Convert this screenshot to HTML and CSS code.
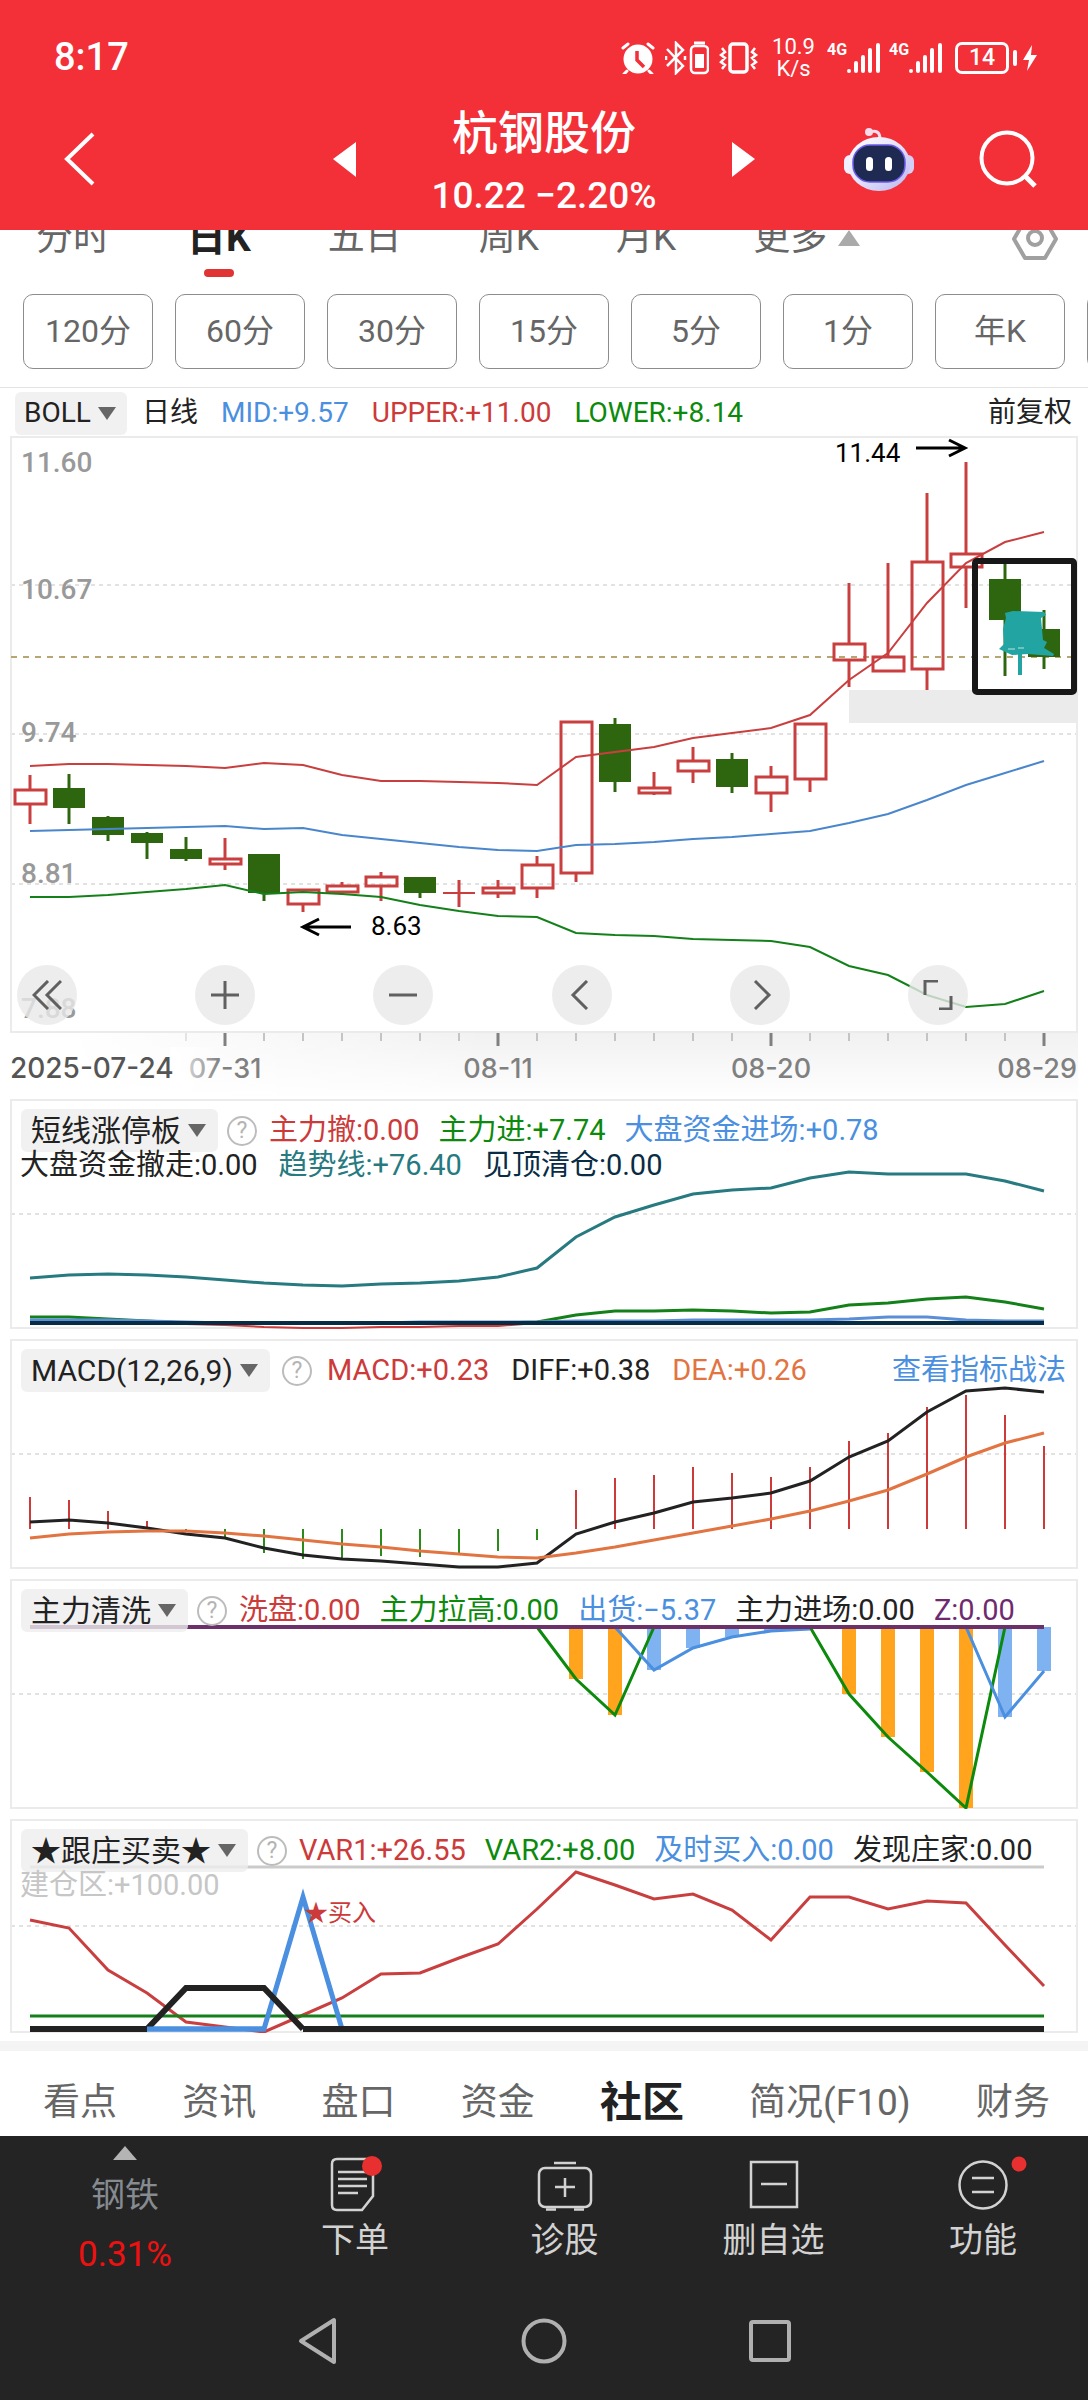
FILE: index.html
```html
<!DOCTYPE html>
<html lang="zh-CN">
<head>
<meta charset="utf-8">
<meta name="viewport" content="width=device-width, initial-scale=1">
<title>杭钢股份</title>
<link rel="stylesheet" href="styles.css">
</head>
<body>
<header class="top">
  <div class="status">
    <span class="clock">8:17</span>
    <svg width="34" height="32" viewBox="0 0 34 32"><circle cx="17" cy="17" r="14.500" fill="#fff"/><path d="M2 6 7 2M32 6 27 2M6 29l-3 3M28 29l3 3" stroke="#fff" stroke-width="3" stroke-linecap="round"/><path d="M16 9v9l7 7" fill="none" stroke="#f32f38" stroke-width="3.500"/></svg>
    <svg class="gap-m" width="44" height="34" viewBox="0 0 44 34" fill="none" stroke="#fff" stroke-width="2.500"><path d="M2 8l16 17-7 7V2l7 7L2 25M1 15v4M20 15v4"/><rect x="26" y="5" width="17" height="27" rx="4"/><path d="M29 2h11" stroke-width="3"/><path d="M30 13h9v14h-9z" fill="#fff" stroke="none"/></svg>
    <svg class="gap-m" width="40" height="34" viewBox="0 0 40 34" fill="none" stroke="#fff"><rect x="11" y="3" width="17" height="28" rx="3" stroke-width="3.500"/><path d="M3 7l3 4-4 3 4 3-4 4 4 3-3 4M36 7l-3 4 4 3-4 3 4 4-4 3 3 4" stroke-width="2.500"/></svg>
    <span class="rate"><span>10.9</span><span>K/s</span></span>
    <span class="cell"><span class="gen">4G</span><svg width="34" height="32" viewBox="0 0 34 32" stroke="#fff" stroke-width="4" stroke-linecap="round"><path d="M2 29v0M9 21v8M16 15v14M23 8v21M31 3v26"/></svg></span>
    <span class="cell"><span class="gen">4G</span><svg width="34" height="32" viewBox="0 0 34 32" stroke="#fff" stroke-width="4" stroke-linecap="round"><path d="M2 29v0M9 21v8M16 15v14M23 8v21M31 3v26"/></svg></span>
    <span class="battery">14</span>
    <svg class="bolt" width="14" height="28" viewBox="0 0 14 28"><path d="M9 1 0 16h6l-2 11L14 11H8z" fill="#fff"/></svg>
  </div>
  <div class="titlebar">
    <button class="icon-btn" aria-label="返回"><svg width="32" height="54" viewBox="0 0 32 54"><path d="M29 2 3 27l26 25" fill="none" stroke="#fff" stroke-width="4"/></svg></button>
    <div class="stock">
      <button class="icon-btn" aria-label="上一只"><svg width="23" height="35" viewBox="0 0 23 35"><path d="M23 0v35L0 17z" fill="#fff"/></svg></button>
      <div class="quote"><h1>杭钢股份</h1><p>10.22 −2.20%</p></div>
      <button class="icon-btn" aria-label="下一只"><svg width="23" height="35" viewBox="0 0 23 35"><path d="M0 0v35l23-18z" fill="#fff"/></svg></button>
    </div>
    <div class="tools">
      <button class="icon-btn" aria-label="智能助手"><svg width="70" height="64" viewBox="0 0 70 64">
        <defs><linearGradient id="shell" x1="0" y1="0" x2="1" y2="1"><stop offset="0" stop-color="#ffffff"/><stop offset=".5" stop-color="#e4e2fb"/><stop offset="1" stop-color="#b9b4ee"/></linearGradient></defs>
        <path d="M26 5c6-2 10 0 10 7" fill="none" stroke="#f6dcec" stroke-width="3"/><circle cx="25" cy="5" r="4" fill="#f8dcec"/>
        <rect x="0" y="28" width="12" height="19" rx="6" fill="#f2f0ff"/><rect x="58" y="28" width="12" height="19" rx="6" fill="#d5cff5"/>
        <ellipse cx="35" cy="37" rx="31" ry="27" fill="url(#shell)"/>
        <rect x="9" y="18" width="52" height="37" rx="17" fill="#1e2a52" stroke="#6a5be8" stroke-width="1.500"/>
        <rect x="22" y="30" width="7" height="14" rx="3.500" fill="#fff"/><rect x="41" y="30" width="7" height="14" rx="3.500" fill="#fff"/></svg></button>
      <button class="icon-btn" aria-label="搜索"><svg width="58" height="58" viewBox="0 0 58 58" fill="none" stroke="#fff" stroke-width="4"><circle cx="28" cy="28" r="25.500"/><path d="M46 46l10 10" stroke-width="5"/></svg></button>
    </div>
  </div>
</header>

<main>
  <nav class="periods">
    <a href="#fs">分时</a><a href="#dk" class="on">日K</a><a href="#wr">五日</a><a href="#zk">周K</a><a href="#yk">月K</a><a href="#more" class="more">更多<svg width="22" height="16" viewBox="0 0 22 16"><path d="M11 0 22 16H0z" fill="#aaa"/></svg></a>
    <button class="icon-btn gear" aria-label="设置"><svg width="46" height="42" viewBox="0 0 46 42" fill="none" stroke="#a0a0a0" stroke-width="4"><path d="M13 2h20l11 19-11 19H13L2 21z" stroke-linejoin="round"/><circle cx="23" cy="20" r="7"/></svg></button>
  </nav>
  <div class="minutes">
    <button>120分</button><button>60分</button><button>30分</button><button>15分</button><button>5分</button><button>1分</button><button>年K</button><button aria-label="季K"></button>
  </div>

  <div class="boll">
    <label class="pick"><select aria-label="主图指标"><option>BOLL</option></select></label>
    <span class="c-ink cycle">日线</span>
    <span class="c-blue">MID:+9.57</span><span class="c-red">UPPER:+11.00</span><span class="c-green">LOWER:+8.14</span>
    <button class="link c-ink">前复权</button>
  </div>

  <section class="stage main-chart">
    <svg id="kline" viewBox="0 0 1068 597"></svg>
    <div class="controls">
      <button aria-label="最早"><svg width="30" height="30" viewBox="0 0 30 30"><path d="M16 1 2 15l14 14M29 1 15 15l14 14"/></svg></button>
      <button aria-label="放大"><svg width="30" height="30" viewBox="0 0 30 30"><path d="M1 15h28M15 1v28"/></svg></button>
      <button aria-label="缩小"><svg width="30" height="30" viewBox="0 0 30 30"><path d="M1 15h28"/></svg></button>
      <button aria-label="左移"><svg width="30" height="30" viewBox="0 0 30 30"><path d="M20 1 6 15l14 14"/></svg></button>
      <button aria-label="右移"><svg width="30" height="30" viewBox="0 0 30 30"><path d="M10 1l14 14-14 14"/></svg></button>
      <button aria-label="全屏"><svg width="30" height="30" viewBox="0 0 30 30"><path d="M2 15V1h13M28 16v13H16"/></svg></button>
    </div>
  </section>
  <svg id="axis" class="axis" viewBox="0 0 1068 66"></svg>

  <section class="stage">
    <svg id="trend" viewBox="0 0 1068 230"></svg>
    <div class="legend">
      <div class="row">
        <label class="pick"><select aria-label="副图指标一"><option>短线涨停板</option></select></label><button class="help" aria-label="说明">?</button>
        <span class="c-red">主力撤:0.00</span><span class="c-green">主力进:+7.74</span><span class="c-blue">大盘资金进场:+0.78</span>
      </div>
      <div class="row second"><span class="c-ink">大盘资金撤走:0.00</span><span class="c-teal">趋势线:+76.40</span><span class="c-navy">见顶清仓:0.00</span></div>
    </div>
  </section>
  <section class="stage">
    <svg id="macd" viewBox="0 0 1068 230"></svg>
    <div class="legend">
      <div class="row wide">
        <label class="pick"><select aria-label="副图指标二"><option>MACD(12,26,9)</option></select></label><button class="help" aria-label="说明">?</button>
        <span class="c-red">MACD:+0.23</span><span class="c-ink">DIFF:+0.38</span><span class="c-orange">DEA:+0.26</span>
        <a class="guide c-blue" href="#guide">查看指标战法</a>
      </div>
    </div>
  </section>
  <section class="stage">
    <svg id="wash" viewBox="0 0 1068 230"></svg>
    <div class="legend">
      <div class="row">
        <label class="pick"><select aria-label="副图指标三"><option>主力清洗</option></select></label><button class="help" aria-label="说明">?</button>
        <span class="c-red">洗盘:0.00</span><span class="c-green">主力拉高:0.00</span><span class="c-blue">出货:−5.37</span><span class="c-ink">主力进场:0.00</span><span class="c-purple">Z:0.00</span>
      </div>
    </div>
  </section>
  <section class="stage last">
    <svg id="follow" viewBox="0 0 1068 214"></svg>
    <div class="legend">
      <div class="row">
        <label class="pick"><select aria-label="副图指标四"><option>★跟庄买卖★</option></select></label><button class="help" aria-label="说明">?</button>
        <span class="c-red">VAR1:+26.55</span><span class="c-green">VAR2:+8.00</span><span class="c-blue">及时买入:0.00</span><span class="c-ink">发现庄家:0.00</span>
      </div>
      <div class="row second"><span class="c-pale">建仓区:+100.00</span></div>
    </div>
  </section>

  <nav class="tabs">
    <a href="#kd">看点</a><a href="#zx">资讯</a><a href="#pk">盘口</a><a href="#zj">资金</a><a href="#sq" class="on">社区</a><a href="#jk">简况(F10)</a><a href="#cw">财务</a>
  </nav>
</main>

<footer class="dock">
  <div class="actions">
    <button class="sector"><svg width="24" height="14" viewBox="0 0 24 14"><path d="M12 0l12 14H0z" fill="#b4b4b4"/></svg><span class="name">钢铁</span><span class="pct">0.31%</span></button>
    <button><svg width="60" height="56" viewBox="0 0 60 56" fill="none" stroke="#d2d2d2" stroke-width="2.500"><path d="M12 3h31q5 0 5 5v32L37 54H12q-5 0-5-5V8q0-5 5-5z"/><path d="M13 16h29M13 23h29M13 30h29M13 37h20"/><circle cx="47" cy="10" r="10" fill="#e93030" stroke="none"/></svg><span>下单</span></button>
    <button><svg width="60" height="56" viewBox="0 0 60 56" fill="none" stroke="#d2d2d2" stroke-width="2.500"><rect x="4" y="12" width="52" height="39" rx="6"/><path d="M19 7h22M30 22v19M20 31h20M11 53.500h10M39 53.500h10"/></svg><span>诊股</span></button>
    <button><svg width="60" height="56" viewBox="0 0 60 56" fill="none" stroke="#d2d2d2" stroke-width="2.500"><path d="M7 6h46v45H7zM17 28h26"/></svg><span>删自选</span></button>
    <button><svg width="90" height="56" viewBox="0 0 90 56" fill="none" stroke="#d2d2d2" stroke-width="2.500"><circle cx="45" cy="29" r="23.500"/><path d="M34 22h22M34 36h22"/><circle cx="81" cy="8" r="7.500" fill="#e93030" stroke="none"/></svg><span>功能</span></button>
  </div>
  <div class="system">
    <button class="icon-btn" aria-label="系统返回"><svg width="42" height="48" viewBox="0 0 42 48"><path d="M37 3v42L4 24z" fill="none" stroke="#b0b0b0" stroke-width="4" stroke-linejoin="round"/></svg></button>
    <button class="icon-btn" aria-label="主屏幕"><svg width="46" height="46" viewBox="0 0 46 46"><circle cx="23" cy="23" r="20.500" fill="none" stroke="#b0b0b0" stroke-width="4"/></svg></button>
    <button class="icon-btn" aria-label="最近任务"><svg width="42" height="42" viewBox="0 0 42 42"><rect x="2" y="2" width="38" height="38" rx="2" fill="none" stroke="#b0b0b0" stroke-width="4"/></svg></button>
  </div>
</footer>
<script src="charts.js"></script>
</body>
</html>
```
FILE: styles.css
```css
* { box-sizing: border-box; }

body {
  margin: 0;
  background: #fff;
  color: #222;
  font-family: Roboto, "Noto Sans CJK SC", sans-serif;
  font-size: 29px;
  line-height: 1.2;
}

button, select {
  margin: 0;
  padding: 0;
  border: 0;
  background: none;
  color: inherit;
  font: inherit;
}
a { color: inherit; text-decoration: none; }
svg { display: block; flex: none; }
h1, p { margin: 0; }

.c-ink { color: #222; }
.c-red { color: #cc3a3a; }
.c-green { color: #0c8a0c; }
.c-blue { color: #4a8fe0; }
.c-teal { color: #267a80; }
.c-navy { color: #082c44; }
.c-orange { color: #e27442; }
.c-purple { color: #6f2a6f; }
.c-pale { color: #c6c6c6; }

/* header */
.top {
  position: relative;
  z-index: 1;
  background: #f32f38;
  color: #fff;
  padding-top: 34px;
}
.status {
  display: flex;
  align-items: center;
  height: 48px;
  padding: 0 51px 0 54px;
}
.clock { margin-right: auto; font-size: 38px; font-weight: 500; }
.gap-m { margin-left: 10px; }
.rate {
  display: flex;
  flex-direction: column;
  align-items: center;
  margin-left: 13px;
  font-size: 22px;
  line-height: 22px;
}
.cell { display: flex; align-items: flex-start; margin-left: 8px; }
.rate + .cell { margin-left: 12px; }
.gen { font-size: 16px; line-height: 16px; font-weight: 700; width: 20px; }
.battery {
  position: relative;
  width: 54px;
  height: 32px;
  margin-left: 12px;
  border: 3px solid #fff;
  border-radius: 7px;
  font-size: 23px;
  font-weight: 500;
  line-height: 26px;
  text-align: center;
}
.battery::after {
  content: "";
  position: absolute;
  top: 5px;
  right: -11px;
  width: 4px;
  height: 16px;
  border-radius: 2px;
  background: #fff;
}
.bolt { margin-left: 14px; }

.titlebar {
  display: grid;
  grid-template-columns: 1fr auto 1fr;
  align-items: center;
  height: 148px;
  padding: 6px 51px 0 64px;
}
.stock { display: flex; align-items: center; justify-content: space-between; width: 422px; margin-left: -13px; }
.quote { margin-bottom: -8px; text-align: center; }
.quote h1 { font-size: 46px; font-weight: 500; line-height: 66px; }
.quote p { font-size: 37px; font-weight: 500; line-height: 60px; }
.tools { display: flex; align-items: center; justify-content: flex-end; gap: 65px; }

/* period tabs */
.periods {
  display: flex;
  align-items: flex-start;
  gap: 77px;
  margin-top: -16px;
  padding: 0 30px 0 36px;
  height: 80px;
  font-size: 37px;
  line-height: 48px;
  color: #666;
}
.periods .on {
  display: flex;
  flex-direction: column;
  align-items: center;
  gap: 7px;
  color: #222;
  font-size: 39px;
  font-weight: 700;
}
.periods .on::after {
  content: "";
  width: 30px;
  height: 8px;
  border-radius: 4px;
  background: #e03434;
}
.more { display: flex; gap: 11px; }
.more svg { margin-top: 16px; }
.gear { margin: 4px 0 0 auto; }

.minutes {
  display: flex;
  gap: 22px;
  padding: 0 0 18px 23px;
  overflow: hidden;
  border-bottom: 1px solid #e4e4e4;
}
.minutes button {
  flex: none;
  width: 130px;
  height: 75px;
  border: 1px solid #8c8c8c;
  border-radius: 10px;
  color: #666;
  font-size: 32px;
}

/* indicator headings */
.boll {
  display: flex;
  align-items: center;
  gap: 23px;
  height: 48px;
  padding: 2px 16px 0 15px;
  font-size: 28px;
}
.cycle { margin-left: -8px; }
.boll .link { margin-left: auto; }

.pick {
  display: flex;
  align-items: center;
  gap: 7px;
  height: 43px;
  padding: 0 12px 0 10px;
  border-radius: 6px;
  background: rgba(238, 238, 238, .8);
  color: #222;
  font-size: 30px;
}
.boll .pick { font-size: 28px; padding: 0 11px 0 9px; }
.pick select { appearance: none; }
.pick::after {
  content: "";
  border: 9px solid transparent;
  border-top: 13px solid #666;
  border-bottom: 0;
}

.stage { display: grid; margin: 0 10px 10px; }
.stage > * { grid-area: 1 / 1; min-width: 0; }
.stage > svg { width: 100%; }
.main-chart { margin-bottom: 0; }
.last { margin-bottom: 8px; }
.axis {
  margin: 0 10px;
  background: linear-gradient(to right, #fff 5%, transparent 45%), linear-gradient(#f1f1f1, #fff);
}

.controls {
  display: flex;
  align-self: end;
  justify-content: space-between;
  padding: 0 110px 8px 7px;
}
.controls button {
  display: grid;
  place-items: center;
  width: 60px;
  height: 60px;
  border-radius: 50%;
  background: rgba(232, 232, 232, .8);
}
.controls path { fill: none; stroke: #606060; stroke-width: 3px; }

.legend { padding: 10px 12px 0 11px; }
.row { display: flex; align-items: center; gap: 19px; white-space: nowrap; }
.row.wide { gap: 22px; }
.row.second { margin-left: -1px; gap: 21px; line-height: 26px; }
.help {
  width: 30px;
  height: 30px;
  margin: 0 -7px 0 -10px;
  border: 2px solid #bcbcbc;
  border-radius: 50%;
  color: #b4b4b4;
  font-size: 23px;
  line-height: 26px;
}
.guide { margin-left: auto; }

.grid { stroke: #e2e2e2; stroke-width: 2px; stroke-dasharray: 4 4; }
.frame { fill: none; stroke: #ebebeb; stroke-width: 2px; }
.scale { fill: #999; font-size: 28px; font-weight: 500; }
.date { fill: #808080; font-size: 27px; font-family: Inter, sans-serif; font-weight: 500; }
.date.first { fill: #555; font-size: 28px; }
.mark { font-size: 26px; fill: #000; }
.signal { font-size: 24px; fill: #cc3a3a; }

/* content tabs */
.tabs {
  display: flex;
  align-items: center;
  justify-content: space-between;
  height: 95px;
  padding: 18px 38px 0 43px;
  border-top: 10px solid #f4f4f4;
  color: #666;
  font-size: 37px;
  line-height: 48px;
}
.tabs .on { color: #222; font-size: 42px; font-weight: 700; }

/* dock */
.dock { background: #242424; color: #d2d2d2; }
.actions { display: grid; grid-template-columns: 250fr 210fr 209fr 209fr 210fr; height: 150px; }
.actions button {
  display: flex;
  flex-direction: column;
  align-items: center;
  justify-content: flex-start;
  padding-top: 20px;
  font-size: 34px;
  line-height: 56px;
}
.actions .sector { padding-top: 10px; }
.sector .name { color: #858b90; line-height: 70px; }
.sector .pct { color: #ee1111; font-size: 35px; line-height: 50px; }
.system {
  display: flex;
  align-items: center;
  justify-content: center;
  gap: 182px;
  padding: 31px 0 35px;
}
```
FILE: charts.js
```js
const NS = "http://www.w3.org/2000/svg";
const RED = "#cc3a3a", UP = "#c93f3f", DOWN = "#2e6610";
const x = i => 20 + 39 * i;

function add(svg, tag, attrs, text) {
  const el = document.createElementNS(NS, tag);
  for (const key in attrs) el.setAttribute(key, attrs[key]);
  if (text) el.textContent = text;
  svg.appendChild(el);
  return el;
}
function line(svg, ys, color, width = 2, start = 0) {
  const points = ys.map((y, i) => x(i + start) + "," + y).join(" ");
  add(svg, "polyline", { points, fill: "none", stroke: color, "stroke-width": width });
}
function bar(svg, i, y1, y2, color, width) {
  add(svg, "path", { d: `M${x(i)} ${y1}V${y2}`, stroke: color, "stroke-width": width });
}
function frame(svg, height, grids) {
  grids.forEach(y => add(svg, "path", { d: `M1 ${y}H1067`, class: "grid" }));
  add(svg, "rect", { x: 1, y: 1, width: 1066, height: height - 2, class: "frame" });
}

// Candles: [up, high, body top, body bottom, low]
const k = document.getElementById("kline");
add(k, "rect", { x: 839, y: 254, width: 229, height: 33, fill: "#ebebeb" });
frame(k, 597, [149, 298, 448]);
add(k, "path", { d: "M1 221H1067", stroke: "#b8a672", "stroke-width": 2, "stroke-dasharray": "6 6" });
[["11.60", 36], ["10.67", 163], ["9.74", 306], ["8.81", 447], ["7.88", 582]]
  .forEach(([t, y]) => add(k, "text", { x: 11, y, class: "scale" }, t));
[
  [1, 339, 353, 369, 388], [0, 338, 352, 372, 388], [0, 380, 381, 399, 405], [0, 396, 397, 407, 423],
  [0, 401, 413, 423, 425], [1, 402, 422, 429, 434], [0, 418, 418, 457, 465], [1, 453, 453, 469, 476],
  [1, 446, 449, 457, 459], [1, 436, 440, 451, 465], [0, 441, 441, 457, 462], [1, 444, 456, 458, 471],
  [1, 444, 451, 458, 462], [1, 420, 428, 453, 462], [1, 285, 285, 438, 446], [0, 282, 288, 346, 356],
  [1, 336, 351, 358, 359], [1, 311, 324, 336, 347], [0, 317, 323, 351, 357], [1, 330, 340, 358, 376],
  [1, 287, 287, 344, 356], [1, 147, 207, 225, 251], [1, 127, 220, 236, 236], [1, 57, 125, 234, 254],
  [1, 26, 117, 132, 172], [0, 128, 143, 184, 240], [0, 174, 193, 221, 233]
].forEach(([up, high, top, bottom, low], i) => {
  const color = up ? UP : DOWN;
  bar(k, i, high, top, color, 3);
  bar(k, i, bottom, low, color, 3);
  if (!up || bottom - top < 5) {
    add(k, "rect", { x: x(i) - 16, y: top, width: 32, height: bottom - top, fill: color });
  } else {
    add(k, "rect", { x: x(i) - 15, y: top + 1, width: 31, height: bottom - top - 2, fill: "none", stroke: color, "stroke-width": 3 });
  }
});
line(k, [330,328,328,329,330,332,327,329,339,345,345,346,347,349,321,316,311,302,297,292,279,244,217,167,127,106,96], UP);
line(k, [395,394,393,392,391,390,393,392,399,403,407,411,414,415,409,408,406,403,401,398,395,387,378,364,349,337,325], "#4a86cc");
line(k, [461,461,459,456,453,449,458,456,458,461,469,475,480,481,497,499,500,503,504,505,511,530,539,559,571,568,555], "#14801a");
add(k, "text", { x: 825, y: 26, class: "mark" }, "11.44");
add(k, "text", { x: 361, y: 499, class: "mark" }, "8.63");
add(k, "path", { d: "M906 12H955M939 4 955 12 939 20M341 491H293M309 483 293 491 309 499", fill: "none", stroke: "#000", "stroke-width": 3 });
add(k, "path", { d: "M995 177 1003 175 1034 176 1036 179 1031 182 1033 204 1037 206 1034 212 1044 218 1043 220 1018 218 1002 219 989 213 994 208 993 193 996 182Z", fill: "#22a5a2" });
add(k, "path", { d: "M1010 215V239", stroke: "#22a5a2", "stroke-width": 4 });
add(k, "path", { d: "M998 213H1005M1008 212H1014", stroke: "#b8e4e2", "stroke-width": 1 });
add(k, "rect", { x: 965, y: 125, width: 99, height: 131, rx: 2, fill: "none", stroke: "#181818", "stroke-width": 6 });

const axis = document.getElementById("axis");
for (let i = 4; i < 27; i++) {
  const major = [5, 12, 19, 26].includes(i);
  bar(axis, i, 0, major ? 13 : 8, major ? "#808080" : i === 4 ? "#e4e4e4" : "#c4c4c4", major ? 3 : 2);
}
const fade = add(add(axis, "defs", {}), "linearGradient", { id: "fade" });
add(fade, "stop", { offset: 0, "stop-color": "#fff" });
add(fade, "stop", { offset: 1, "stop-color": "#fff", "stop-opacity": 0 });
[["07-31", 215], ["08-11", 488], ["08-20", 761]]
  .forEach(([t, cx]) => add(axis, "text", { x: cx, y: 45, "text-anchor": "middle", class: "date" }, t));
add(axis, "text", { x: 1067, y: 45, "text-anchor": "end", class: "date" }, "08-29");
add(axis, "rect", { x: 160, y: 14, width: 50, height: 46, fill: "url(#fade)" });
add(axis, "text", { x: 0, y: 45, class: "date first" }, "2025-07-24");

const t = document.getElementById("trend");
frame(t, 230, [115]);
line(t, [179,176,175,176,178,181,184,186,187,185,184,182,178,169,138,118,106,95,91,89,79,73,75,75,75,82,92], "#267a80", 3);
line(t, [224,225,226,228,229,229,228,228,227,227,224], RED, 2, 3);
line(t, [218,218,220,222,224,224,224,224,224,224,224,224,224,223,216,212,212,211,212,214,213,206,204,200,198,203,210], "#14801a", 3);
line(t, [221,221,221,222,223,224,224,224,224,224,223,223,223,223,222,222,222,221,221,221,221,220,218,218,221,222,222], "#5a8fd8", 3);
line(t, Array(27).fill(224), "#082c44", 4);

const m = document.getElementById("macd");
frame(m, 230, [115]);
[158,161,172,182,192,199,214,220,221,217,218,214,212,201,151,139,136,128,134,138,128,102,94,68,56,76,107]
  .forEach((y, i) => bar(m, i, 190, y, y < 190 ? RED : "#2a8a1a", 2));
line(m, [183,181,184,189,195,199,209,216,220,222,225,228,228,224,195,183,174,163,159,154,142,118,102,73,52,49,53], "#222", 3);
line(m, [199,195,193,192,192,194,197,201,205,208,212,215,218,219,214,208,201,194,187,180,172,162,151,135,118,104,94], "#e27442", 3);

const w = document.getElementById("wash");
frame(w, 230, [115]);
[[14,100],[15,136],[21,115],[22,158],[23,193],[24,229]].forEach(([i, y]) => bar(w, i, 48, y, "#ffa41c", 14));
[[16,91],[17,69],[18,58],[19,52],[25,138],[26,92]].forEach(([i, y]) => bar(w, i, 48, y, "#7fb2f0", 14));
line(w, [48,100,136,48], "#0c8a0c", 3, 13);
line(w, [48,115,158,193,229,48], "#0c8a0c", 3, 20);
line(w, [48,91,69,58,52,50], "#4a8fe0", 3, 15);
line(w, [48,138,92], "#4a8fe0", 3, 24);
line(w, Array(27).fill(48), "#6b3168", 4);

const f = document.getElementById("follow");
frame(f, 214, [107]);
line(f, Array(27).fill(48), "#cbcbcb", 3);
line(f, [101,109,151,174,203,208,213,196,179,155,154,139,125,90,53,66,80,75,91,121,78,78,90,82,84,126,167], UP, 3);
line(f, Array(27).fill(197), "#14801a", 3);
line(f, [210,210,210,210,78,210], "#4a8fe0", 5, 3);
line(f, [210,210,210,210], "#222", 6);
line(f, [210,169,169,169,210], "#222", 6, 3);
line(f, Array(20).fill(210), "#222", 6, 7);
line(f, [210,210,210,210], "#4a8fe0", 5, 3);
add(f, "text", { x: 294, y: 102, class: "signal" }, "★买入");
```
